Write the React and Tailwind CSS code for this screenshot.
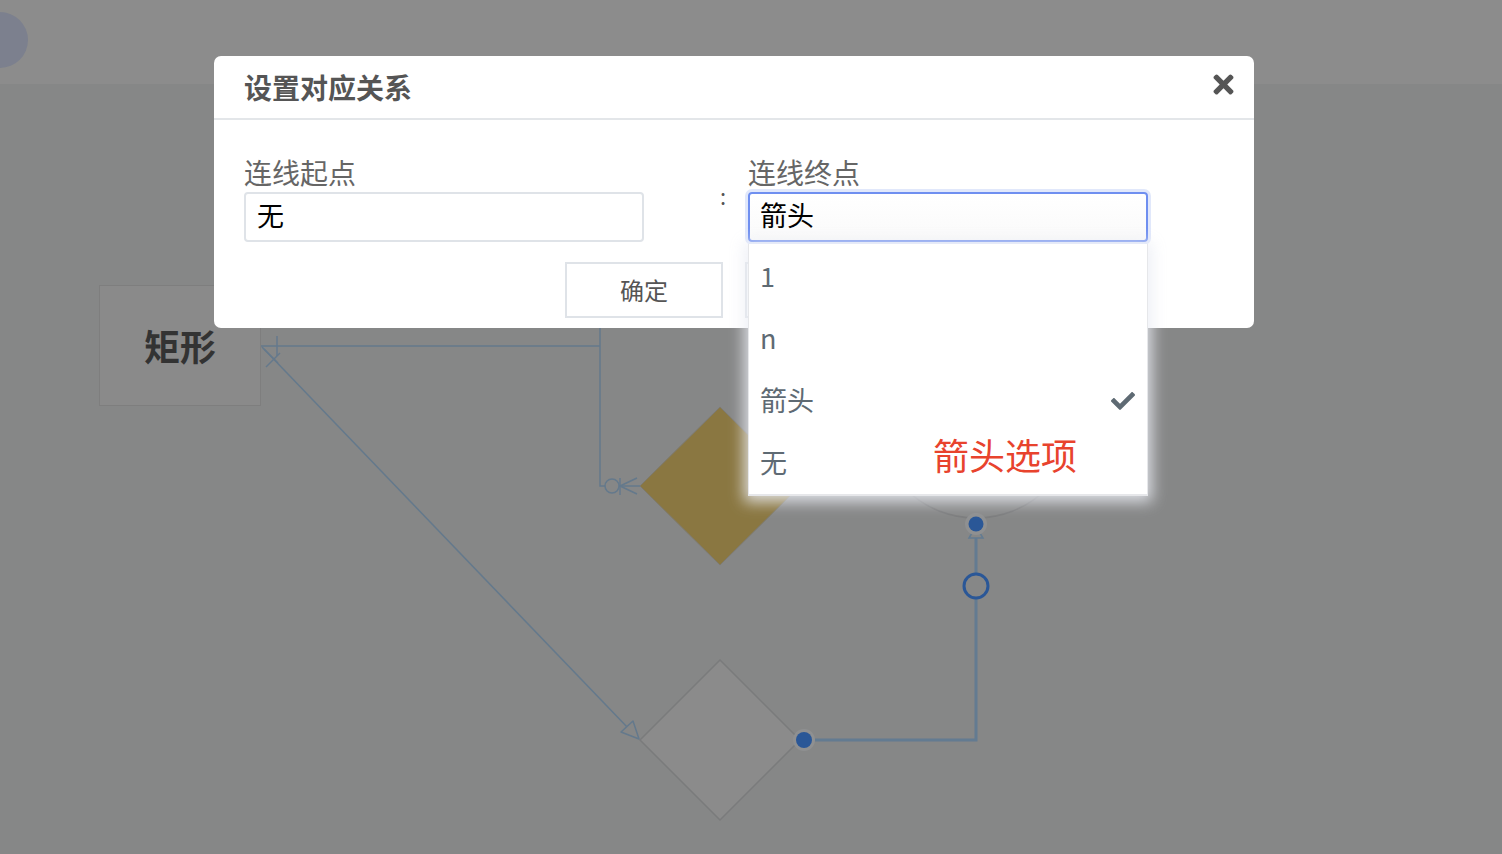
import React from "react";
import { FaTimes, FaCheck } from "react-icons/fa";

function Canvas() {
  const line = "#64798c";
  const blue = "#2a5797";
  return (
    <svg
      className="absolute left-0 top-0"
      width="1502"
      height="854"
      viewBox="0 0 1502 854"
    >
      {/* circle shape (mostly hidden) */}
      <circle cx="976" cy="418" r="100" fill="#888989" stroke="#7c7d7e" strokeWidth="1.5" />
      {/* yellow diamond */}
      <polygon points="720,407 800,486 720,565 640,486" fill="#8a7741" stroke="#7e7a6e" strokeWidth="1" />
      {/* gray diamond */}
      <polygon points="720,660 800,740 720,820 640,740" fill="#8b8b8b" stroke="#7a7b7c" strokeWidth="1.5" />

      {/* line from rect to yellow diamond */}
      <path d="M261 346 H600 M600 300 V486 H640" fill="none" stroke={line} strokeWidth="1.5" />
      <line x1="277" y1="336" x2="277" y2="356" stroke={line} strokeWidth="1.5" />
      <line x1="264" y1="349" x2="278" y2="363" stroke={line} strokeWidth="1.5" />
      <line x1="266" y1="367" x2="280" y2="353" stroke={line} strokeWidth="1.5" />
      {/* crow's foot + circle at diamond */}
      <circle cx="612" cy="486" r="7" fill="#868787" stroke={line} strokeWidth="1.5" />
      <line x1="620" y1="478" x2="620" y2="495" stroke={line} strokeWidth="1.5" />
      <line x1="620" y1="486" x2="637" y2="478" stroke={line} strokeWidth="1.5" />
      <line x1="620" y1="486" x2="637" y2="494" stroke={line} strokeWidth="1.5" />

      {/* diagonal to gray diamond */}
      <line x1="262" y1="347" x2="629" y2="729" stroke={line} strokeWidth="1.5" />
      <polygon points="639,739 621,732 633,721" fill="#868787" stroke={line} strokeWidth="1.5" strokeLinejoin="round" />

      {/* thick connection from gray diamond to circle */}
      <path d="M804 740 H976 V538" fill="none" stroke="#637b91" strokeWidth="3" />
      <path d="M969 538 L972 533 H980 L983 538 Z" fill="none" stroke="#637b91" strokeWidth="1.5" />
      <circle cx="976" cy="586" r="12" fill="#868787" stroke={blue} strokeWidth="3" />

      {/* anchor dots */}
      <circle cx="976" cy="524" r="11" fill="#8f9091" />
      <circle cx="976" cy="524" r="7.5" fill={blue} />
      <circle cx="804" cy="740" r="11" fill="#8f9091" />
      <circle cx="804" cy="740" r="8" fill={blue} />
    </svg>
  );
}

export default function App() {
  return (
    <div className="relative w-[1502px] h-[854px] overflow-hidden bg-[#868787] font-['Noto_Sans_CJK_SC','Noto_Sans',sans-serif]">
      {/* top bar */}
      <div className="relative h-[84px] bg-[#8c8c8c]">
        <div className="absolute left-[-28px] top-[12px] w-[56px] h-[56px] rounded-full bg-[#7c808e]" />
      </div>

      <Canvas />

      {/* rectangle node */}
      <div className="absolute left-[99px] top-[285px] w-[162px] h-[121px] bg-[#8a8a8a] border border-[#7e7e7e] flex items-center justify-center">
        <span className="text-[36px] leading-none font-bold text-[#333333] -mt-[2px]">矩形</span>
      </div>

      {/* modal */}
      <div className="absolute left-[214px] top-[56px] w-[1040px] h-[272px] bg-white rounded-[7px]">
        <div className="h-[64px] border-b-2 border-[#e3e6e9] flex items-center justify-between pl-[30px] pr-[16px]">
          <span className="text-[28px] leading-[32px] font-bold text-[#555555]">设置对应关系</span>
          <FaTimes size={29} className="text-[#555555] -mt-[6px]" />
        </div>
        <div className="px-[30px] pt-[36px]">
          <div className="flex">
            <div className="w-[400px]">
              <div className="text-[28px] leading-[32px] text-[#666666]">连线起点</div>
              <div className="mt-[4px] h-[50px] border-2 border-[#dfe3e8] rounded-[4px] flex items-center pl-[11px] pb-[4px] text-[27px] text-black">
                无
              </div>
            </div>
            <div className="w-[104px] pl-[76px] pt-[25px] text-[22px] leading-[28px] text-[#555555]">:</div>
            <div className="w-[400px]">
              <div className="text-[28px] leading-[32px] text-[#666666]">连线终点</div>
              <div className="mt-[4px] h-[50px] border-2 border-[#6f8ff0] rounded-[4px] shadow-[0_0_0_3px_#e1e8fb] flex items-center pl-[10px] pb-[4px] text-[27px] text-black bg-gradient-to-b from-white to-[#fafafa]">
                箭头
              </div>
            </div>
          </div>
          <div className="mt-[20px] flex justify-center gap-[22px]">
            <div className="w-[158px] h-[56px] border-2 border-[#dfe3e8] flex items-center justify-center text-[24px] text-[#555555]">
              确定
            </div>
            <div className="w-[158px] h-[56px] border-2 border-[#dfe3e8] flex items-center justify-center text-[24px] text-[#555555]">
              取消
            </div>
          </div>
        </div>
      </div>

      {/* dropdown */}
      <div className="absolute left-[748px] top-[244px] w-[400px] h-[252px] bg-white border-x border-b-2 border-[#e6e7ea] shadow-[0_2px_14px_4px_rgba(235,237,245,0.85)] pt-[3px]">
        {["1", "n", "箭头", "无"].map((o) => (
          <div
            key={o}
            className="h-[62px] flex items-center justify-between pl-[11px] pr-[12px] pb-[4px] text-[27px] text-[#5e6a73]"
          >
            <span>{o}</span>
            {o === "箭头" && <FaCheck size={24} className="text-[#5e6a73] mt-[2px]" />}
          </div>
        ))}
        <div className="absolute left-[184px] top-[186px] text-[36px] leading-[48px] text-[#e8432d]">箭头选项</div>
      </div>
    </div>
  );
}
